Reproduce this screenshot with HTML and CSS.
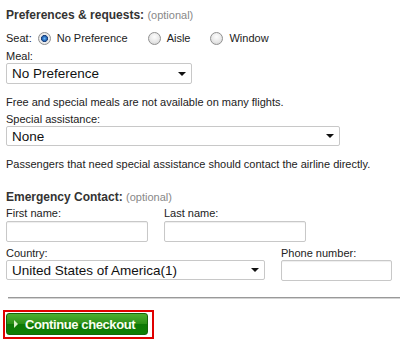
FILE: index.html
```html
<!DOCTYPE html>
<html lang="en">
<head>
  <meta charset="UTF-8" />
  <title>Preferences &amp; requests</title>
  <link rel="stylesheet" href="styles.css">
</head>
<body>
  <div class="prefs">
    <h3 class="heading">Preferences &amp; requests: <span class="opt">(optional)</span></h3>

    <div class="seat-row">
      <span class="seat-label">Seat:</span>
      <label class="radio"><input type="radio" name="seat" checked> No Preference</label>
      <label class="radio"><input type="radio" name="seat"> Aisle</label>
      <label class="radio"><input type="radio" name="seat"> Window</label>
    </div>

    <label class="field-label">Meal:</label>
    <div class="select-wrap meal">
      <select>
        <option>No Preference</option>
      </select>
    </div>
    <p class="note">Free and special meals are not available on many flights.</p>

    <label class="field-label tight">Special assistance:</label>
    <div class="select-wrap assist">
      <select>
        <option>None</option>
      </select>
    </div>
    <p class="note">Passengers that need special assistance should contact the airline directly.</p>

    <h3 class="heading emergency">Emergency Contact: <span class="opt">(optional)</span></h3>

    <div class="name-row">
      <div>
        <label class="field-label">First name:</label>
        <input type="text" class="text-input">
      </div>
      <div>
        <label class="field-label">Last name:</label>
        <input type="text" class="text-input">
      </div>
    </div>

    <div class="country-row">
      <div>
        <label class="field-label">Country:</label>
        <div class="select-wrap country">
          <select>
            <option>United States of America(1)</option>
          </select>
        </div>
      </div>
      <div>
        <label class="field-label">Phone number:</label>
        <input type="text" class="text-input phone">
      </div>
    </div>
  </div>

  <hr class="divider">

  <div class="checkout">
    <button class="btn-continue"><span class="arrow"></span>Continue checkout</button>
  </div>
</body>
</html>
```

FILE: styles.css
```css
body {
  margin: 0;
  font-family: "Liberation Sans", Arial, sans-serif;
  font-size: 11px;
  color: #222;
  background: #fff;
}

.prefs {
  padding-left: 6px;
}

.heading {
  margin: 8px 0 0;
  font-size: 12px;
  line-height: 14px;
  font-weight: bold;
  color: #333;
}

.heading .opt {
  font-weight: normal;
  font-size: 11px;
  color: #888;
}

.heading.emergency {
  margin-top: 19px;
}

.seat-row {
  display: flex;
  align-items: center;
  height: 18px;
  margin-top: 7px;
  font-size: 11px;
}

.seat-label {
  margin-right: 6px;
}

.radio {
  display: flex;
  align-items: center;
  margin-right: 20px;
}

.radio input {
  appearance: none;
  -webkit-appearance: none;
  width: 13px;
  height: 13px;
  margin: 0 6px 0 0;
  border: 1px solid #909090;
  border-radius: 50%;
  background: radial-gradient(circle at 50% 35%, #fdfdfd 0, #e8e8e8 55%, #cdcdcd 100%);
  box-sizing: border-box;
}

.radio input:checked {
  background: radial-gradient(circle at 50% 50%, #6fb8f5 0, #2a6fc0 2px, #1d3f78 3.2px, #eeeeee 3.8px, #dadada 100%);
}

.field-label {
  display: block;
  margin-top: 2px;
  line-height: 14px;
  font-size: 11px;
  color: #222;
}

.field-label.tight {
  margin-top: 3px;
}

.select-wrap {
  position: relative;
  height: 21px;
}

.select-wrap::after {
  content: "";
  position: absolute;
  right: 6px;
  top: 9px;
  border-left: 4px solid transparent;
  border-right: 4px solid transparent;
  border-top: 4px solid #111;
}

.select-wrap select {
  appearance: none;
  -webkit-appearance: none;
  width: 100%;
  height: 100%;
  margin: 0;
  padding: 0 0 0 5px;
  border: 1px solid #c8c8c8;
  border-radius: 2px;
  background: #fff;
  font-family: "Liberation Sans", Arial, sans-serif;
  font-size: 13.5px;
  color: #111;
  box-sizing: border-box;
}

.meal { width: 186px; }
.assist { width: 334px; height: 20px; }
.assist::after { top: 8px; }
.country { width: 259px; height: 20px; }
.country::after { top: 8px; }

.note {
  margin: 11px 0 0;
  line-height: 14px;
  font-size: 11px;
  color: #222;
}

.name-row {
  display: grid;
  grid-template-columns: 142px 142px;
  column-gap: 16px;
}

.text-input {
  display: block;
  width: 142px;
  height: 21px;
  margin-top: 1px;
  border: 1px solid #c8c8c8;
  border-radius: 2px;
  box-shadow: inset 0 1px 1px #eee;
  box-sizing: border-box;
}

.country-row {
  display: grid;
  grid-template-columns: 259px 111px;
  column-gap: 16px;
  margin-top: 4px;
}

.country-row .field-label {
  margin-top: 0;
}

.text-input.phone {
  width: 111px;
  height: 21px;
  margin-top: 0;
}

.divider {
  margin: 16px 1px 0 8px;
  height: 0;
  border: none;
  border-top: 1px solid #999;
  border-bottom: 1px solid #d4d4d4;
}

.checkout {
  padding: 11px 0 0 3px;
}

.btn-continue {
  display: flex;
  align-items: center;
  width: 151px;
  height: 29px;
  padding: 1px 4px 2px 1px;
  border: 2px solid #e00000;
  background: #fff;
  background-clip: padding-box;
  box-sizing: border-box;
  cursor: pointer;
  font-family: "Liberation Sans", Arial, sans-serif;
  font-weight: bold;
  font-size: 13px;
  letter-spacing: -0.4px;
  color: #fafff0;
  position: relative;
  z-index: 0;
}

.btn-continue::before {
  content: "";
  position: absolute;
  left: 1px;
  top: 1px;
  right: 4px;
  bottom: 2px;
  border: 1px solid #15650a;
  border-radius: 3px;
  background: linear-gradient(#4fae30, #2a8f16 50%, #0e7806 51%, #0f7d05);
  z-index: -1;
}

.btn-continue .arrow {
  position: relative;
  margin: 0 7px 0 8px;
  border-top: 4px solid transparent;
  border-bottom: 4px solid transparent;
  border-left: 4px solid #d8f0c8;
}
```
